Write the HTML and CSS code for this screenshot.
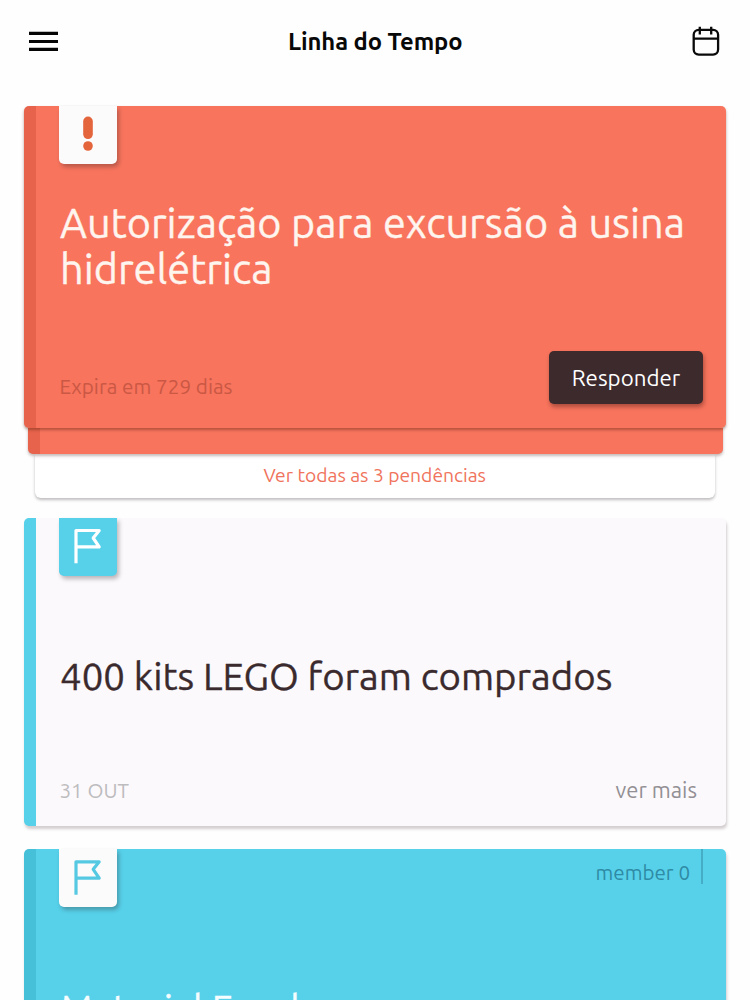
FILE: index.html
```html
<!DOCTYPE html>
<html lang="pt-BR">
<head>
<meta charset="utf-8">
<title>Linha do Tempo</title>
<link rel="stylesheet" href="styles.css">
</head>
<body>
<header class="topbar">
  <svg class="menu-icon" width="30" height="22" viewBox="0 0 30 22"><path d="M0 3.4H29M0 11.5H29M0 19.4H29" stroke="#050505" stroke-width="3.2"/></svg>
  <h1 class="page-title">Linha do Tempo</h1>
  <svg class="calendar-icon" width="28" height="30" viewBox="0 0 28 30" fill="none" stroke="#0a0a0a" stroke-width="2.3"><rect x="1.7" y="3.8" width="24.4" height="24.8" rx="5"/><path d="M1.7 12.6H26.1M7.8 .8V8.6M19.2 .8V8.6"/></svg>
</header>
<main class="timeline">
  <section class="stack">
    <article class="card card-alert">
      <div class="badge badge-light">
        <svg width="10" height="36" viewBox="0 0 10 36"><rect x=".2" y=".5" width="9.6" height="22.6" rx="4.8" fill="#e4643c"/><circle cx="5" cy="30" r="4.8" fill="#e4643c"/></svg>
      </div>
      <h2 class="card-title">Autorização para excursão à usina<br>hidrelétrica</h2>
      <div class="card-footer">
        <span class="expiry">Expira em 729 dias</span>
        <button class="reply">Responder</button>
      </div>
    </article>
    <div class="stack-edge"></div>
    <a class="stack-more">Ver todas as 3 pendências</a>
  </section>
  <article class="card card-plain">
    <div class="badge badge-cyan">
      <svg class="flag" width="28" height="36" viewBox="0 0 28 36"><path d="M2 35.3V2.5H25.2L19.2 10L25.2 18.9H2" fill="none" stroke="#fff" stroke-width="3.2" stroke-linejoin="round"/></svg>
    </div>
    <h2 class="card-title">400 kits LEGO foram comprados</h2>
    <div class="card-footer">
      <span class="date">31 OUT</span>
      <a class="more">ver mais</a>
    </div>
  </article>
  <article class="card card-cyan">
    <div class="card-head">
      <div class="badge badge-light">
        <svg class="flag" width="28" height="36" viewBox="0 0 28 36"><path d="M2 35.8V2.8H25.2L19.2 10.3L25.2 19.2H2" fill="none" stroke="#55c9e2" stroke-width="3.2" stroke-linejoin="round"/></svg>
      </div>
      <span class="member">member 0</span>
    </div>
    <h2 class="card-title">Material Escolar</h2>
  </article>
</main>
</body>
</html>
```

FILE: styles.css
```css
* { box-sizing: border-box; }
body {
  margin: 0;
  height: 1000px;
  overflow: hidden;
  background: #fefefe;
  font-family: Ubuntu, "Noto Sans", sans-serif;
}
h1, h2 { margin: 0; font-weight: 400; }
svg { display: block; }
.topbar {
  display: flex;
  align-items: center;
  justify-content: space-between;
  height: 84px;
  padding: 0 30px 2px 28.5px;
}
.page-title {
  font-size: 23.8px;
  font-weight: 700;
  line-height: 30px;
  color: #080808;
  letter-spacing: -0.1px;
}
.timeline { padding: 22px 24px 0 23.5px; }
.card {
  position: relative;
  display: flex;
  flex-direction: column;
  border-left: 12px solid;
  border-radius: 5px;
  padding: 0 23px 0 24px;
  box-shadow: 1px 3px 3px rgba(70, 45, 50, 0.23);
}
.card-alert {
  z-index: 2;
  height: 322px;
  background: #f8745d;
  border-color: #e8634b;
  box-shadow: 0 2px 3px rgba(100, 40, 20, 0.45);
}
.card-plain {
  height: 308px;
  margin-top: 20px;
  background: #fbf9fc;
  border-color: #57d0e9;
}
.card-cyan {
  height: 322px;
  margin-top: 23px;
  background: #57d1ea;
  border-color: #46bfd9;
}
.badge {
  display: flex;
  justify-content: center;
  width: 58px;
  height: 58px;
  margin-left: -0.5px;
  padding-top: 10px;
  border-radius: 0 0 5px 5px;
  box-shadow: 2px 3px 4px rgba(40, 25, 30, 0.3);
}
.badge-light { background: #fcfbfc; }
.badge-cyan { background: #57d0e9; }
.card-title {
  padding-left: 0.5px;
  font-size: 38.4px;
  line-height: 46px;
  white-space: nowrap;
  -webkit-text-stroke: 0.35px currentColor;
}
.card-alert .card-title { margin-top: 36px; font-size: 41.4px; color: #fff5ef; }
.card-plain .card-title { margin-top: 77px; color: #3a2a2d; }
.card-cyan .card-title { margin-top: 78px; color: #f5fdff; }
.card-footer {
  display: flex;
  justify-content: space-between;
  margin-top: auto;
}
.card-alert .card-footer { height: 77px; }
.card-plain .card-footer { height: 49px; padding-right: 6px; line-height: 26px; }
.expiry { margin-top: 22px; font-size: 20.7px; line-height: 28px; color: #ca5844; }
.reply {
  width: 154px;
  height: 53px;
  padding: 0;
  border: 0;
  border-radius: 5px;
  background: #3c2a2d;
  color: #fff;
  font: 22.3px/53px Ubuntu, "Noto Sans", sans-serif;
  box-shadow: 1px 3px 4px rgba(60, 20, 15, 0.4);
}
.date { font-size: 20.6px; line-height: 28px; color: #bdbcbe; }
.more { font-size: 22px; color: #939095; }
.stack-edge {
  position: relative;
  z-index: 1;
  height: 26px;
  margin: 0 3px 0 4.5px;
  background: #f8745d;
  border-left: 12px solid #e8634b;
  border-radius: 0 0 5px 5px;
  box-shadow: 0 2px 3px rgba(70, 45, 40, 0.32);
}
.stack-more {
  display: block;
  height: 44px;
  margin: 0 11px;
  border-radius: 0 0 6px 6px;
  background: #fff;
  box-shadow: 0 2px 3px rgba(50, 40, 45, 0.3);
  color: #f0735c;
  font-size: 19.3px;
  line-height: 43px;
  text-align: center;
}
.card-head { display: flex; justify-content: space-between; }
.member {
  height: 35px;
  padding-right: 11px;
  border-right: 2px solid #46adc7;
  color: #2f8ba5;
  font-size: 20.6px;
  line-height: 47px;
}
```
